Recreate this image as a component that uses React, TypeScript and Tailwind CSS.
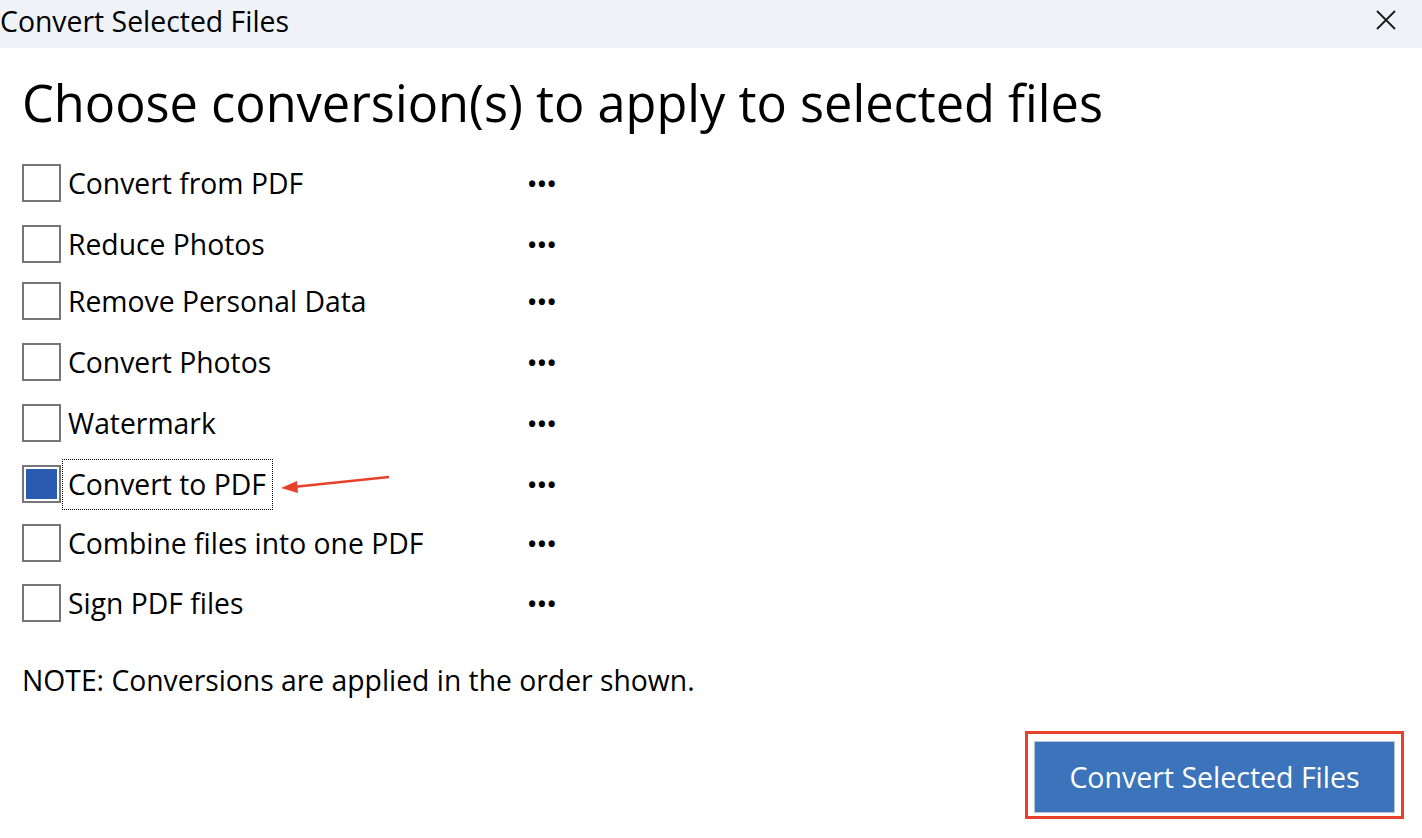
const items = [
  { label: "Convert from PDF", mt: "mt-[0px]" },
  { label: "Reduce Photos", mt: "mt-[23px]" },
  { label: "Remove Personal Data", mt: "mt-[19px]" },
  { label: "Convert Photos", mt: "mt-[23px]" },
  { label: "Watermark", mt: "mt-[23px]" },
  { label: "Convert to PDF", mt: "mt-[23px]" },
  { label: "Combine files into one PDF", mt: "mt-[21px]" },
  { label: "Sign PDF files", mt: "mt-[22px]" },
];

function Box({ checked }: { checked: boolean }) {
  return (
    <div className="h-[38px] w-[39px] shrink-0 border-2 border-[#767676] bg-white p-[2px]">
      {checked && <div className="h-full w-full bg-[#2b5bb0]" />}
    </div>
  );
}

export default function App() {
  return (
    <div
      className="h-[838px] w-[1422px] overflow-hidden bg-white text-black"
      style={{ fontFamily: '"Open Sans", "Noto Sans", sans-serif' }}
    >
      {/* title bar */}
      <div className="flex h-[48px] items-start justify-between bg-[#eff2f7]">
        <span className="mt-[4px] text-[28.4px] leading-[34px]">Convert Selected Files</span>
        <svg className="mr-[26px] mt-[10px]" width="20" height="20" viewBox="0 0 20 20">
          <path d="M1 1 L19 19 M19 1 L1 19" stroke="#1a1a1a" strokeWidth="1.8" fill="none" />
        </svg>
      </div>
      <div className="px-[22px]">
        <h1 className="mt-[26px] text-[50.5px] leading-[58px]">Choose conversion(s) to apply to selected files</h1>
        <div className="mt-[32px] flex flex-col">
          {items.map(({ label, mt }) => {
            const on = label === "Convert to PDF";
            return (
              <div key={label} className={"flex h-[38px] items-center " + mt}>
                <Box checked={on} />
                <div className="relative w-[467px] pl-[2px]">
                  <span
                    className={
                      "inline-block py-[5px] pl-[5px] pr-[6px] text-[28.3px] leading-[39px] " +
                      (on ? "outline outline-1 outline-dotted outline-black" : "")
                    }
                  >
                    {label}
                  </span>
                  {on && (
                    <svg className="absolute left-[218px] top-[13px]" width="112" height="22" viewBox="0 0 112 22">
                      <line x1="14" y1="14" x2="110" y2="4" stroke="#e8402b" strokeWidth="2.5" />
                      <polygon points="2,15 18,8 19,20" fill="#e8402b" />
                    </svg>
                  )}
                </div>
                <span className="text-[22px] font-bold tracking-[1.5px]">•••</span>
              </div>
            );
          })}
        </div>
        <p className="mt-[39px] text-[28.3px] leading-[38px]">NOTE: Conversions are applied in the order shown.</p>
      </div>
      <div className="mt-[32px] flex justify-end pr-[18px]">
        <div className="border-[3px] border-[#e8402b] px-[6px] pb-[3px] pt-[7px]">
          <button className="h-[72px] w-[361px] border border-[#b8c6d8] bg-[#3b74ba] text-[28.5px] text-white">
            Convert Selected Files
          </button>
        </div>
      </div>
    </div>
  );
}
